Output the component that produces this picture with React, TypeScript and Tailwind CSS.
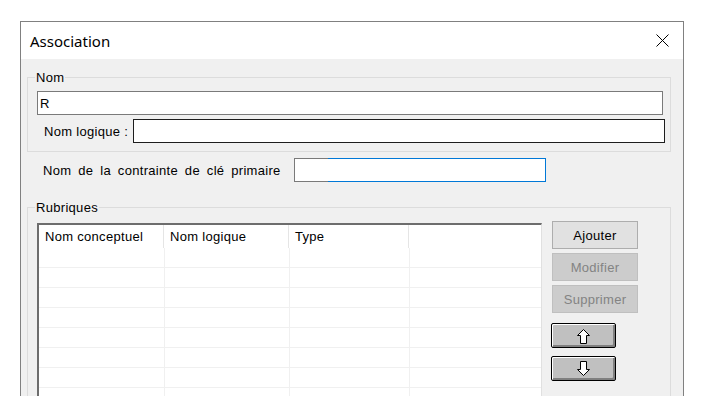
const headers = ['Nom conceptuel', 'Nom logique', 'Type', '']
const headerWidths = ['w-[125px]', 'w-[125px]', 'w-[120px]']
const bodyWidths = ['w-[126px]', 'w-[125px]', 'w-[120px]']
const rows = Array.from({ length: 8 }, (_, i) => i)

function ArrowIcon({ down = false }: { down?: boolean }) {
  return (
    <svg width="13" height="15" viewBox="0 0 13 15" className={down ? 'rotate-180' : ''}>
      <polygon
        points="6.5,0.5 12.5,6.5 9.5,6.5 9.5,14.5 3.5,14.5 3.5,6.5 0.5,6.5"
        fill="#fff"
        stroke="#000"
        strokeWidth="1"
        strokeLinejoin="miter"
      />
    </svg>
  )
}

function ArrowButton({ down = false }: { down?: boolean }) {
  return (
    <div className="flex h-[25px] w-[65px] items-center justify-center rounded-[2px] border border-black bg-[#c0c0c0] shadow-[inset_1px_1px_0_#fff,inset_-2px_-2px_0_#808080]">
      <div className={down ? 'pt-0' : 'pt-[2px]'}>
        <ArrowIcon down={down} />
      </div>
    </div>
  )
}

function Button({ label, disabled = false }: { label: string; disabled?: boolean }) {
  return (
    <div
      className={
        disabled
          ? 'flex h-[28px] w-[86px] items-center justify-center border border-[#bfbfbf] bg-[#cccccc] text-[#838383]'
          : 'flex h-[28px] w-[86px] items-center justify-center border border-[#adadad] bg-[#e1e1e1]'
      }
    >
      {label}
    </div>
  )
}

export default function App() {
  return (
    <div className="h-[410px] w-[708px] bg-white pl-[20px] pt-[21px] font-['Liberation_Sans',Arial,sans-serif] text-[13px] leading-[15px] tracking-[0.3px] text-black">
      <div className="flex h-[375px] w-[664px] flex-col overflow-hidden border-x border-t border-[#808080]">
        {/* title bar */}
        <div className="flex h-[37px] shrink-0 items-center justify-between bg-white pl-[9px] pr-[14px]">
          <span className="font-['Noto_Sans',sans-serif] text-[15px] leading-[20px] tracking-normal">Association</span>
          <svg width="13" height="13" viewBox="0 0 13 13">
            <path d="M0.5 0.5 L12.5 12.5 M12.5 0.5 L0.5 12.5" stroke="#000" strokeWidth="1" />
          </svg>
        </div>

        <div className="flex-1 bg-[#f0f0f0] pl-[6px]">
          {/* Nom */}
          <fieldset className="mt-[11px] w-[644px] border border-[#dcdcdc] p-0">
            <legend className="ml-[7px] px-[1px] leading-[15px]">Nom</legend>
            <div className="pb-[8px] pl-[9px] pr-[5px] pt-[6px]">
              <div className="mr-[2px] flex h-[24px] items-center border border-[#7a7a7a] bg-white pl-[2px]">R</div>
              <div className="mt-[4px] flex items-center">
                <span className="w-[96px] shrink-0 pl-[7px]">Nom logique :</span>
                <div className="h-[24px] flex-1 border border-[#1e1e1e] bg-white" />
              </div>
            </div>
          </fieldset>

          {/* contrainte */}
          <div className="mt-[6px] flex items-center">
            <span className="w-[267px] shrink-0 pl-[16px] [word-spacing:3px]">Nom de la contrainte de clé primaire</span>
            <div className="h-[24px] w-[252px] bg-[linear-gradient(to_right,#7a7a7a_34px,#0078d7_34px)] p-px">
              <div className="h-full w-full bg-white" />
            </div>
          </div>

          {/* Rubriques */}
          <fieldset className="mt-[18px] h-[260px] w-[644px] border border-[#dcdcdc] p-0">
            <legend className="ml-[7px] px-[1px] leading-[15px]">Rubriques</legend>
            <div className="flex items-start pl-[9px] pt-[6px]">
              <div className="mt-[2px] h-[240px] w-[505px] shrink-0 border-l-2 border-r border-t-2 border-l-[#6d6d6d] border-r-[#e0e0e0] border-t-[#6d6d6d] bg-white">
                <div className="flex h-[23px]">
                  {headers.map((h, i) => (
                    <div
                      key={i}
                      className={
                        i < 3
                          ? `${headerWidths[i]} flex items-center border-r border-[#e5e5e5] pl-[6px]`
                          : 'flex flex-1 items-center pl-[6px]'
                      }
                    >
                      {h}
                    </div>
                  ))}
                </div>
                {rows.map((r) => (
                  <div key={r} className="flex h-[20px] border-b border-[#f0f0f0]">
                    {bodyWidths.map((w, i) => (
                      <div key={i} className={`${w} border-r border-[#f0f0f0]`} />
                    ))}
                    <div className="flex-1" />
                  </div>
                ))}
              </div>

              <div className="ml-[10px] flex flex-col">
                <div className="flex flex-col gap-[4px]">
                  <Button label="Ajouter" />
                  <Button label="Modifier" disabled />
                  <Button label="Supprimer" disabled />
                </div>
                <div className="-ml-[1px] mt-[10px] flex flex-col gap-[8px]">
                  <ArrowButton />
                  <ArrowButton down />
                </div>
              </div>
            </div>
          </fieldset>
        </div>
      </div>
    </div>
  )
}
